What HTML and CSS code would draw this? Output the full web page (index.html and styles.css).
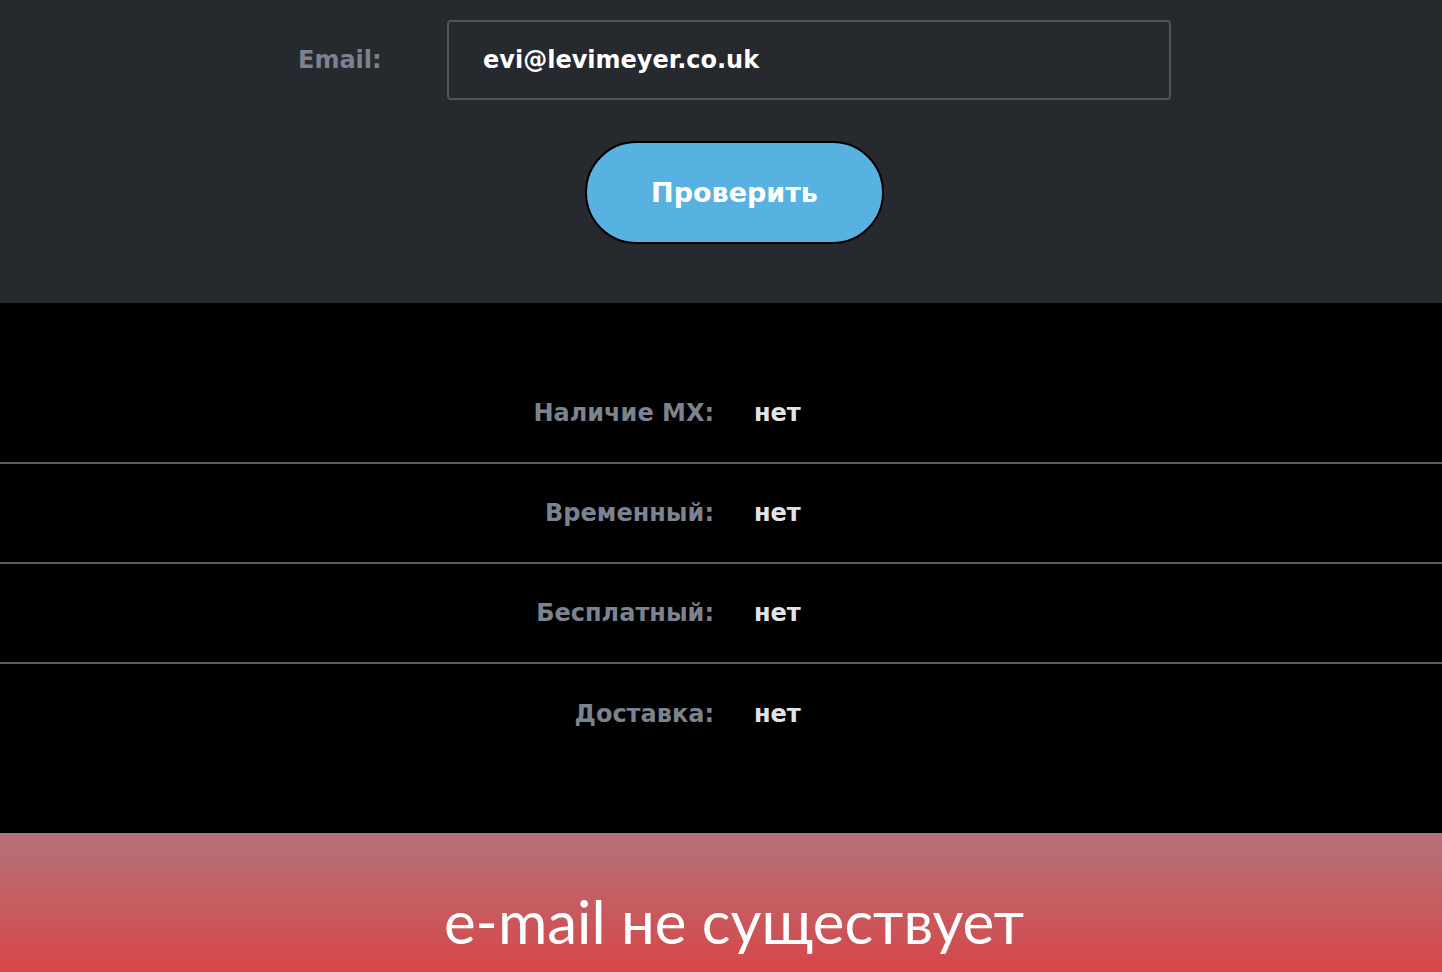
FILE: index.html
```html
<!DOCTYPE html>
<html lang="ru">
<head>
<meta charset="utf-8">
<title>Проверка email</title>
<link rel="stylesheet" href="styles.css">
</head>
<body>
<section class="form-section">
  <div class="form-wrap">
    <div class="field-row">
      <label class="field-label" for="email">Email:</label>
      <div class="field-input" id="email">evi@levimeyer.co.uk</div>
    </div>
    <div class="btn-row">
      <button class="check-btn" type="button">Проверить</button>
    </div>
  </div>
</section>
<section class="results">
  <div class="result-row"><span class="r-label">Наличие MX:</span><span class="r-value">нет</span></div>
  <div class="result-row"><span class="r-label">Временный:</span><span class="r-value">нет</span></div>
  <div class="result-row"><span class="r-label">Бесплатный:</span><span class="r-value">нет</span></div>
  <div class="result-row"><span class="r-label">Доставка:</span><span class="r-value">нет</span></div>
</section>
<section class="verdict">
  <h2 class="verdict-text">e-mail не существует</h2>
</section>
</body>
</html>
```
FILE: styles.css
```css
html, body {
  margin: 0;
  padding: 0;
  background: #000;
}
body {
  font-family: "DejaVu Sans", "Noto Sans", sans-serif;
}
.form-section {
  background: #26292e;
  height: 303px;
  box-sizing: border-box;
  padding-top: 20px;
}
.form-wrap {
  width: 873px;
  margin-left: calc(50% - 423px);
}
.field-row {
  display: flex;
  align-items: center;
}
.field-label {
  width: 149px;
  color: #7c8390;
  font-size: 24px;
  font-weight: 600;
}
.field-input {
  flex: 1;
  height: 80px;
  box-sizing: border-box;
  border: 2px solid #4f5258;
  border-radius: 4px;
  display: flex;
  align-items: center;
  padding-left: 34px;
  color: #fff;
  font-size: 24px;
  font-weight: 600;
}
.btn-row {
  display: flex;
  justify-content: center;
  margin-top: 41px;
}
.check-btn {
  width: 299px;
  height: 103px;
  border: 2px solid #000;
  border-radius: 52px;
  background: #57b2e1;
  color: #fff;
  font-family: inherit;
  font-size: 27px;
  font-weight: 700;
  cursor: pointer;
}
.results {
  background: #000;
  padding: 61px 0 69px;
}
.result-row {
  display: grid;
  grid-template-columns: 1fr 1fr;
  align-items: center;
  height: 100px;
  box-sizing: border-box;
  border-bottom: 2px solid #585c63;
  font-size: 24px;
  font-weight: 700;
}
.result-row:last-child {
  border-bottom: none;
}
.r-label {
  text-align: right;
  padding-right: 7px;
  color: #7b8290;
}
.r-value {
  padding-left: 33px;
  color: #e2e3e6;
}
.verdict {
  height: 180px;
  display: flex;
  align-items: center;
  justify-content: center;
  padding-left: 26px;
  box-sizing: border-box;
  background: linear-gradient(to bottom, #b5727a 0%, #e03a3a 100%);
}
.verdict-text {
  margin: 0 0 4px;
  color: #fff;
  font-family: "Lato", "Open Sans", sans-serif;
  font-weight: 400;
  font-size: 60px;
}
```
